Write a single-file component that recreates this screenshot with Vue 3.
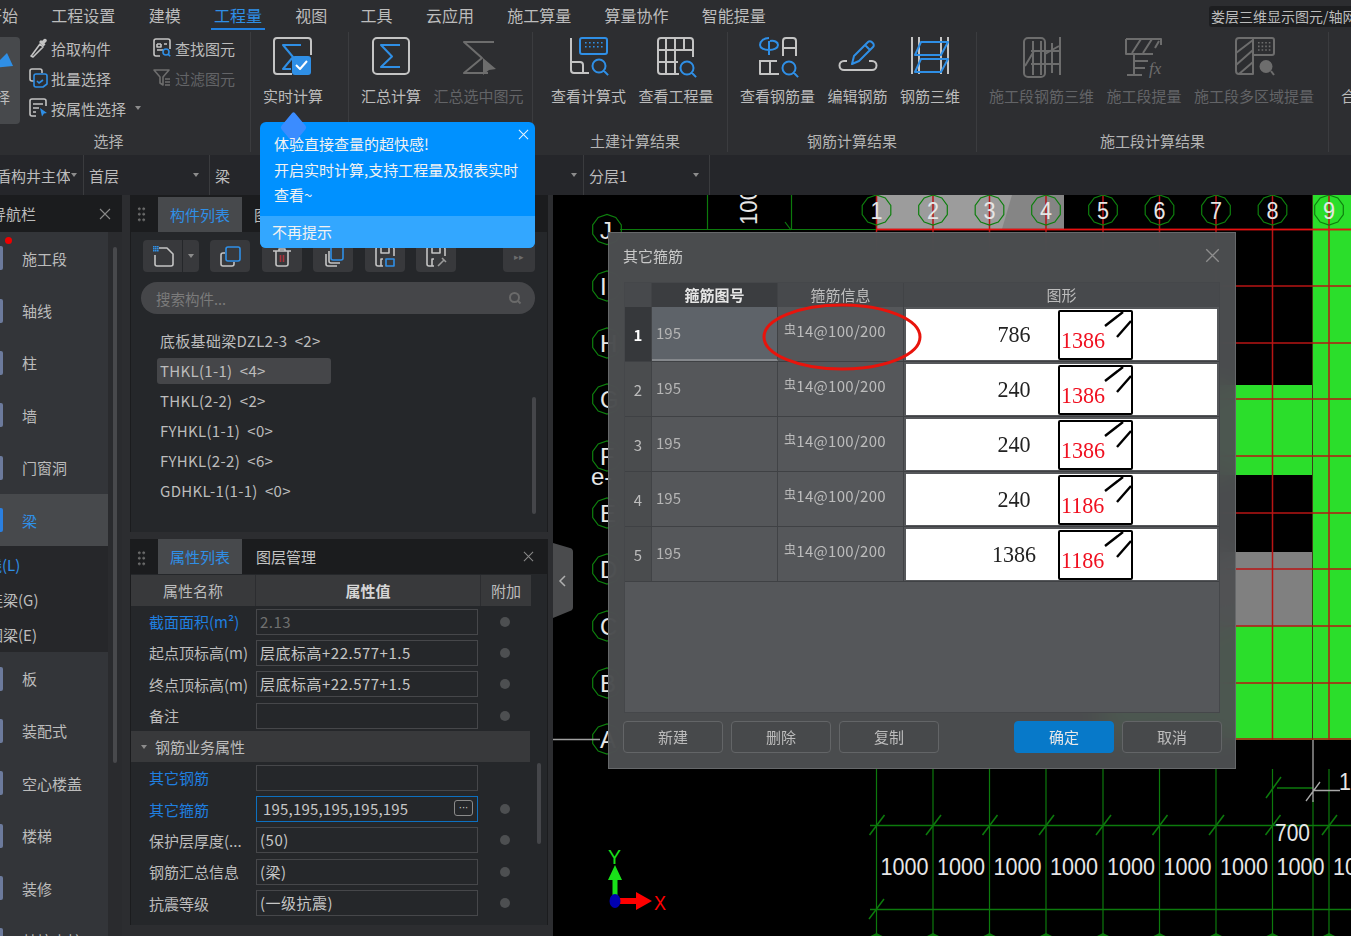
<script setup>
import { h } from "vue";

const colors = { g: "#c4c4c4", b: "#2f8fe6", d: "#6d6d6d", w: "#ffffff", r: "#a8323a", s: "#9a9a9a" };

// small drawing helpers for the icon data
const mag = (x, y, r) =>
  `M${x - r} ${y}a${r} ${r} 0 1 0 ${2 * r} 0a${r} ${r} 0 1 0 ${-2 * r} 0M${x + r * 0.7} ${y + r * 0.7}l${r * 0.7} ${r * 0.7}`;
const dots = (x, y, cols, rows, step) => {
  let d = "";
  for (let i = 0; i < cols; i++) {
    for (let j = 0; j < rows; j++) d += `M${x + i * step} ${y + j * step}h1.6v1.6h-1.6z`;
  }
  return d;
};

// each shape: [colour, path, filled?]
const icons = {
  live: [
    ["g", "M41 19V5a3 3 0 0 0-3-3H7a3 3 0 0 0-3 3v30a3 3 0 0 0 3 3h15"],
    ["b", "M31 9H13l10 12-10 12h8"],
    ["b", "M25 20h13a3 3 0 0 1 3 3v13a3 3 0 0 1-3 3H25a3 3 0 0 1-3-3V23a3 3 0 0 1 3-3z", true],
    ["w", "M26 29l4 4 7-8"],
  ],
  sum: [
    ["g", "M9 2h28a4 4 0 0 1 4 4v28a4 4 0 0 1-4 4H9a4 4 0 0 1-4-4V6a4 4 0 0 1 4-4z"],
    ["b", "M32 9H13l11 11.5L13 31h19"],
  ],
  sumSel: [
    ["d", "M38 6H8l18 16L8 37h24"],
    ["d", "M27 22l13 11-7 1-6 5z", true],
  ],
  formula: [
    ["g", "M5 2v32a3 3 0 0 0 3 3h15M5 26h9a3 3 0 0 1 3 3v8"],
    ["b", "M16 2h23a2 2 0 0 1 2 2v12a2 2 0 0 1-2 2H16a2 2 0 0 1-2-2V4a2 2 0 0 1 2-2z"],
    ["b", dots(19, 6, 5, 2, 4), true],
    ["b", mag(33, 30, 6.5)],
  ],
  amount: [
    ["g", "M26 38H8a3 3 0 0 1-3-3V5a3 3 0 0 1 3-3h29a3 3 0 0 1 3 3v16M5 14h35M5 26h20M13 2v36M22 2v36M31 2v12"],
    ["b", mag(34, 32, 6.5)],
  ],
  rebarQty: [
    ["b", "M14 2c-5 0-9 3-9 7 0 3 4 5 9 5s9-2 9-5c0-3-4-5-8-4M14 5v14"],
    ["g", "M28 20V5a3 3 0 0 1 3-3h7a3 3 0 0 1 3 3v15M28 12h13"],
    ["g", "M5 24v14h19M5 25h17M15 25v13"],
    ["b", mag(34, 32, 6.5)],
  ],
  rebarEdit: [
    ["b", "M17 28l2-8L33 6a2.6 2.6 0 0 1 3.7 0l1.3 1.3a2.6 2.6 0 0 1 0 3.7L24 25zM30 9l5 5"],
    ["g", "M12 25H9a4.5 4.5 0 0 0 0 9h28a4.5 4.5 0 0 0 0-9h-3"],
  ],
  rebar3d: [
    ["g", "M5 1v37M12 1v37M34 1v37M41 1v37"],
    ["b", "M14 6h27l-7 13H8zM14 23h27l-7 13H8z"],
  ],
  seg3d: [
    ["d", "M9 2h13a4 4 0 0 1 4 4v31a4 4 0 0 1-4 4H9a4 4 0 0 1-4-4V6a4 4 0 0 1 4-4zM14 5v34M22 5v34M33 7v30M41 1v38M12 15h30M12 28h30M6 30l9-15M26 18l14-8"],
  ],
  segFx: [
    ["d", "M5 3h35v6M5 3v15h27M11 17L20 3M22 17L31 3M38 5L34 12"],
    ["d", "M13 19v20M6 39h15M13 25h14M13 32h11"],
    ["t", "fx"],
  ],
  segArea: [
    ["d", "M22 2H8a3 3 0 0 0-3 3v30a3 3 0 0 0 3 3h14zM5 17L22 4M5 29L22 14M8 38l14-12M22 2h19a2 2 0 0 1 2 2v13a2 2 0 0 1-2 2H22"],
    ["d", dots(27, 6, 4, 3, 3.6), true],
    ["d", "M35 24a6.5 6.5 0 1 0 0 13a6.5 6.5 0 1 0 0-13z", true],
    ["d", "M40 35l3 4"],
  ],
  pick: [
    ["g", "M4 18l-1 1 2 1 1-1 9-9-3-3z"],
    ["g", "M13 3l1 1 2-2a1.8 1.8 0 0 1 2.5 2.5l-2 2 1 1-2 2-4.5-4.5z", true],
  ],
  batch: [
    ["g", "M6 14H4a2 2 0 0 1-2-2V4a2 2 0 0 1 2-2h8a2 2 0 0 1 2 2v2"],
    ["b", "M8 7h9a2 2 0 0 1 2 2v8l-4 3H8a2 2 0 0 1-2-2V9a2 2 0 0 1 2-2zM9 14l2 2 4-3"],
  ],
  attr: [
    ["g", "M8 19H4a2 2 0 0 1-2-2V4a2 2 0 0 1 2-2h12a2 2 0 0 1 2 2v5M5 7h10M5 11h6M5 15h3"],
    ["b", "M12 11l7 5-3 .5-2 3z", true],
  ],
  find: [
    ["g", "M8 19H4a2 2 0 0 1-2-2V4a2 2 0 0 1 2-2h12a2 2 0 0 1 2 2v8M5 7h4M12 7h3M5 7v3h4V7M5 13h6"],
    ["b", mag(14, 15, 3)],
  ],
  filter: [
    ["d", "M2 3h15l-6 7v8l-3-2v-6zM13 12h5M13 15h5M13 18h5"],
  ],
  newDoc: [
    ["g", "M8 4h8l6 6v10a2 2 0 0 1-2 2H6a2 2 0 0 1-2-2V11"],
    ["b", dots(2, 2, 3, 3, 2), true],
  ],
  copy: [
    ["g", "M7 9H5a2 2 0 0 0-2 2v9a2 2 0 0 0 2 2h9a2 2 0 0 0 2-2v-2"],
    ["b", "M10 3h10a2 2 0 0 1 2 2v10a2 2 0 0 1-2 2H10a2 2 0 0 1-2-2V5a2 2 0 0 1 2-2z"],
  ],
  trash: [
    ["g", "M3 7h18M6 7v13a2 2 0 0 0 2 2h8a2 2 0 0 0 2-2V7M9 7V5h6v2"],
    ["r", "M10.5 11v7M13.5 11v7"],
  ],
  layers: [
    ["g", "M5 10v10a2 2 0 0 0 2 2h9M8 7v10a2 2 0 0 0 2 2h9"],
    ["b", "M12 2h8a2 2 0 0 1 2 2v10a2 2 0 0 1-2 2h-8a2 2 0 0 1-2-2V4a2 2 0 0 1 2-2z"],
  ],
  saveIn: [
    ["g", "M10 22H5a2 2 0 0 1-2-2V5a2 2 0 0 1 2-2h14a2 2 0 0 1 2 2v7M8 3v6h8V3M8 22v-7h2"],
    ["b", "M13 15h8v7h-8z"],
  ],
  saveOut: [
    ["g", "M10 22H5a2 2 0 0 1-2-2V5a2 2 0 0 1 2-2h14a2 2 0 0 1 2 2v7M8 3v6h8V3M8 22v-7h2"],
    ["s", "M14 22l6-6M18 14l4 4", false],
  ],
};

const Ico = (props) =>
  h(
    "svg",
    { width: props.w, height: props.h, viewBox: `0 0 ${props.w} ${props.h}`, fill: "none", style: "flex:none;display:block" },
    icons[props.name].map(([c, d, filled]) =>
      c === "t"
        ? h("text", { x: 28, y: 38, fill: colors.d, "font-size": 17, "font-style": "italic", "font-family": "Liberation Serif, serif" }, d)
        : h("path", {
            d,
            fill: filled ? colors[c] : "none",
            stroke: filled ? "none" : colors[c],
            "stroke-width": props.sw || 2,
            "stroke-linejoin": "round",
          })
    )
  );
Ico.props = ["name", "w", "h", "sw"];

// thin close cross, the text glyph looked too heavy
const Cross = (props) =>
  h("svg", { width: props.s, height: props.s, viewBox: "0 0 12 12", fill: "none", stroke: props.c, "stroke-width": 1.1, style: "display:block;flex:none" }, [
    h("path", { d: "M1 1l10 10M11 1L1 11" }),
  ]);
Cross.props = ["s", "c"];

const tabs = ["开始", "工程设置", "建模", "工程量", "视图", "工具", "云应用", "施工算量", "算量协作", "智能提量"];

const groups = [
  { width: 98, label: "", items: [{ icon: "live", text: "实时计算" }] },
  { width: 184, label: "", items: [{ icon: "sum", text: "汇总计算" }, { icon: "sumSel", text: "汇总选中图元", off: true }] },
  { width: 195, label: "土建计算结果", wide: true, items: [{ icon: "formula", text: "查看计算式" }, { icon: "amount", text: "查看工程量" }] },
  { width: 249, label: "钢筋计算结果", items: [{ icon: "rebarQty", text: "查看钢筋量" }, { icon: "rebarEdit", text: "编辑钢筋" }, { icon: "rebar3d", text: "钢筋三维" }] },
  { width: 352, label: "施工段计算结果", items: [{ icon: "seg3d", text: "施工段钢筋三维", off: true }, { icon: "segFx", text: "施工段提量", off: true }, { icon: "segArea", text: "施工段多区域提量", off: true }] },
];

const navTop = ["施工段", "轴线", "柱", "墙", "门窗洞"];
const navSub = ["线(L)", "连梁(G)", "圈梁(E)"];
const navBottom = ["板", "装配式", "空心楼盖", "楼梯", "装修", "基坑支护"];

const tools = [
  { icon: "copy", w: 40 },
  { icon: "trash", w: 40 },
  { icon: "layers", w: 40 },
  { icon: "saveIn", w: 40 },
  { icon: "saveOut", w: 40 },
];

const parts = ["底板基础梁DZL2-3  <2>", "THKL(1-1)  <4>", "THKL(2-2)  <2>", "FYHKL(1-1)  <0>", "FYHKL(2-2)  <6>", "GDHKL-1(1-1)  <0>"];

const propsA = [
  { name: "截面面积(m²)", value: "2.13", link: true, dim: true },
  { name: "起点顶标高(m)", value: "层底标高+22.577+1.5" },
  { name: "终点顶标高(m)", value: "层底标高+22.577+1.5" },
  { name: "备注", value: "" },
];
const propsB = [
  { name: "其它钢筋", value: "", link: true, noDot: true },
  { name: "其它箍筋", value: "195,195,195,195,195", link: true, focus: true },
  { name: "保护层厚度(...", value: "(50)" },
  { name: "钢筋汇总信息", value: "(梁)" },
  { name: "抗震等级", value: "(一级抗震)" },
];

const rows = [
  { no: 1, len: 786, red: 1386 },
  { no: 2, len: 240, red: 1386 },
  { no: 3, len: 240, red: 1386 },
  { no: 4, len: 240, red: 1186 },
  { no: 5, len: 1386, red: 1186 },
];

// drawing coordinates below are page pixels, the svg viewBox starts at the canvas corner
const gridX = [876.5, 933, 989.5, 1046, 1103, 1159.5, 1216, 1272.5, 1329];
const gridY = [229.5, 286, 343, 399, 456, 513, 569, 626, 683, 739];
const sideAxes = ["J", "I", "H", "G", "F", "E", "D", "C", "B", "A"];

const deca = (cx, cy, r) => {
  const pts = [];
  for (let i = 0; i < 10; i++) {
    const a = (i * Math.PI) / 5 + Math.PI / 10;
    pts.push(`${(cx + r * Math.cos(a)).toFixed(1)},${(cy + r * Math.sin(a)).toFixed(1)}`);
  }
  return pts.join(" ");
};
</script>

<template>
  <div class="app">
    <div class="tabbar">
      <span v-for="t in tabs" :key="t" class="tab" :class="{ on: t === '工程量' }">{{ t }}</span>
      <span class="hint">娄层三维显示图元/轴网</span>
    </div>

    <div class="ribbon">
      <div class="group first">
        <div class="select-wrap">
          <div class="big-select">
            <svg width="20" height="16" viewBox="0 0 20 16"><path d="M-8 16L7 1l6 13z" fill="#2f8fe6" /></svg>
            <span>择</span>
          </div>
          <div class="small-col">
            <div class="small"><Ico name="pick" w="20" h="22" sw="1.6" />拾取构件</div>
            <div class="small"><Ico name="batch" w="20" h="22" sw="1.6" />批量选择</div>
            <div class="small"><Ico name="attr" w="20" h="22" sw="1.6" />按属性选择<i class="caret small-caret"></i></div>
          </div>
          <div class="small-col second">
            <div class="small"><Ico name="find" w="20" h="22" sw="1.6" />查找图元</div>
            <div class="small off"><Ico name="filter" w="20" h="22" sw="1.6" />过滤图元</div>
          </div>
        </div>
        <div class="group-label">选择</div>
      </div>
      <div v-for="(g, i) in groups" :key="i" class="group" :class="{ wide: g.wide }" :style="{ width: g.width + 'px' }">
        <div class="items">
          <div v-for="it in g.items" :key="it.text" class="item" :class="{ off: it.off }">
            <Ico :name="it.icon" w="46" h="42" />
            <span>{{ it.text }}</span>
          </div>
        </div>
        <div class="group-label">{{ g.label }}</div>
      </div>
      <div class="group last">
        <div class="items"><div class="item"><div class="icon-gap"></div><span>合法性</span></div></div>
      </div>
    </div>

    <div class="combos">
      <div class="combo c1"><span>盾构井主体</span><i class="caret"></i></div>
      <div class="combo c2"><span>首层</span><i class="caret"></i></div>
      <div class="combo c3"><span>梁</span><i class="caret"></i></div>
      <div class="combo c4"><span>分层1</span><i class="caret"></i></div>
    </div>

    <div class="main">
      <aside class="nav">
        <div class="panel-head nav-head"><span class="nav-title">导航栏</span><Cross s="12" c="#8a8a8a" /></div>
        <div class="nav-body">
          <div class="nav-list">
            <i class="red-dot"></i>
            <div v-for="n in navTop" :key="n" class="nav-item"><i class="stub"></i>{{ n }}</div>
            <div class="nav-item active"><i class="stub blue"></i>梁</div>
            <div class="nav-sub">
              <div v-for="(n, i) in navSub" :key="n" class="sub-item" :class="{ link: i === 0 }">{{ n }}</div>
            </div>
            <div v-for="n in navBottom" :key="n" class="nav-item"><i class="stub"></i>{{ n }}</div>
          </div>
          <div class="nav-track"><i></i></div>
        </div>
      </aside>

      <div class="middle">
        <section class="panel list-panel">
          <div class="panel-head">
            <span class="grip"></span>
            <span class="ptab on">构件列表</span>
            <span class="ptab">图层管理</span>
          </div>
          <div class="toolbar">
            <div class="tbtn split">
              <span class="split-main"><Ico name="newDoc" w="24" h="24" sw="1.6" /></span>
              <span class="split-side"><i class="caret"></i></span>
            </div>
            <div v-for="t in tools" :key="t.icon" class="tbtn" :style="{ width: t.w + 'px' }">
              <Ico :name="t.icon" w="24" h="24" sw="1.6" />
            </div>
            <div class="tbtn more">▸▸</div>
          </div>
          <div class="search">
            <span>搜索构件...</span>
            <svg width="16" height="16" viewBox="0 0 16 16" fill="none" stroke="#6a6a6a" stroke-width="2"><circle cx="7.5" cy="7.5" r="4.5" /><path d="M11 11l2.5 2.5" /></svg>
          </div>
          <div class="parts">
            <div v-for="(p, i) in parts" :key="p" class="part" :class="{ sel: i === 1 }">{{ p }}</div>
            <i class="list-scroll"></i>
          </div>
        </section>

        <section class="panel prop-panel">
          <div class="panel-head prop-top">
            <span class="grip"></span>
            <span class="ptab on">属性列表</span>
            <span class="ptab plain">图层管理</span>
            <span class="close right"><Cross s="11" c="#8a8a8a" /></span>
          </div>
          <div class="prop-head">
            <span class="ph1">属性名称</span>
            <span class="ph2">属性值</span>
            <span class="ph3">附加</span>
          </div>
          <div v-for="p in propsA" :key="p.name" class="prop-row">
            <span class="pname" :class="{ link: p.link }">{{ p.name }}</span>
            <span class="pval" :class="{ dim: p.dim }">{{ p.value }}</span>
            <i class="pdot"></i>
          </div>
          <div class="prop-section"><i class="caret"></i>钢筋业务属性</div>
          <div v-for="p in propsB" :key="p.name" class="prop-row">
            <span class="pname" :class="{ link: p.link }">{{ p.name }}</span>
            <span class="pval" :class="{ focus: p.focus }">{{ p.value }}<b v-if="p.focus" class="dots">···</b></span>
            <i v-if="!p.noDot" class="pdot"></i>
          </div>
          <i class="prop-scroll"></i>
        </section>
        <div class="bottom-strip"><i></i></div>
      </div>

      <div class="canvas">
        <svg class="cad" width="798" height="741" viewBox="553 195 798 741">
          <rect x="553" y="195" width="798" height="741" fill="#000" />
          <rect x="876" y="195" width="188" height="34" fill="#9c9c9c" />
          <polygon points="1012,195 1064,195 1064,229 1002,229" fill="#858585" />
          <rect x="1313" y="195" width="38" height="545" fill="#2bde2b" />
          <rect x="1100" y="385" width="212" height="90" fill="#2bde2b" />
          <rect x="1100" y="552" width="212" height="74" fill="#808080" />
          <rect x="1100" y="626" width="212" height="114" fill="#2bde2b" />
          <path d="M1312.5 195V740" stroke="#3d3d1a" />

          <line v-for="x in gridX" :key="'rv' + x" :x1="x" y1="195" :x2="x" y2="740" stroke="#b81414" stroke-width="1.5" />
          <line v-for="y in gridY" :key="'rh' + y" x1="876" :y1="y" x2="1351" :y2="y" stroke="#b81414" stroke-width="1.5" />
          <path d="M876 229.5H1351" stroke="#e81010" stroke-width="1.5" />

          <path d="M620 229.5H876M707.5 195V229M791.5 195V229M785 222l6 8" stroke="#0c7a0c" stroke-width="1.2" fill="none" />
          <text x="0" y="0" class="cad-t" transform="translate(757 225) rotate(-90)" textLength="37" lengthAdjust="spacingAndGlyphs">100</text>

          <g v-for="(x, i) in gridX" :key="'c' + x">
            <polygon :points="deca(x, 210, 15)" fill="none" stroke="#0e7f0e" stroke-width="1.2" />
            <text :x="x - 6" y="219" class="cad-t" textLength="12" lengthAdjust="spacingAndGlyphs">{{ i + 1 }}</text>
          </g>

          <g v-for="(y, i) in gridY" :key="'a' + y">
            <polygon :points="deca(607, y, 15)" fill="none" stroke="#0e7f0e" stroke-width="1.2" />
            <text x="600" :y="y + 9" class="cad-t">{{ sideAxes[i] }}</text>
          </g>
          <text x="591" y="485" class="cad-t">e-</text>
          <path d="M553 739.5H600" stroke="#a0a0a0" stroke-width="1.5" />

          <!-- lower dimension lines -->
          <line v-for="x in gridX" :key="'gv' + x" :x1="x" y1="769" :x2="x" y2="936" stroke="#0c7a0c" stroke-width="1.2" />
          <path d="M1313 800V936" stroke="#0c7a0c" stroke-width="1.2" />
          <path d="M870 825.5H1351M870 909.5H1351M1277 788H1313" stroke="#0c7a0c" stroke-width="1.5" />
          <line v-for="x in gridX" :key="'t' + x" :x1="x - 7" y1="835" :x2="x + 8" y2="815" stroke="#0c7a0c" stroke-width="1.5" />
          <path d="M869 919l15-20M1266 798l15-21" stroke="#0c7a0c" stroke-width="1.5" />
          <path d="M1313 740V802M1313 790.5H1340M1306 801l14-19" stroke="#a8a8a8" stroke-width="1.3" fill="none" />
          <text v-for="x in gridX" :key="'d' + x" :x="x + 4" y="875" class="cad-t" textLength="48" lengthAdjust="spacingAndGlyphs">1000</text>
          <text x="1275" y="841" class="cad-t" textLength="35" lengthAdjust="spacingAndGlyphs">700</text>
          <text x="1339" y="790" class="cad-t" textLength="12" lengthAdjust="spacingAndGlyphs">1</text>
          <polygon v-for="x in gridX" :key="'b' + x" :points="`${x - 6},936 ${x},933 ${x + 6},936`" fill="#0c7a0c" />

          <!-- axis gizmo -->
          <path d="M612.5 901V880H608L615 865l7 15h-4.5V901z" fill="#19e019" />
          <path d="M615 898h21v-6l16 9-16 9v-6h-21z" fill="#ff0000" />
          <ellipse cx="615" cy="901" rx="5.5" ry="7" fill="#0000b0" />
          <text x="608" y="864" fill="#19e019" class="gizmo" textLength="13" lengthAdjust="spacingAndGlyphs">Y</text>
          <text x="654" y="910" fill="#ff0000" class="gizmo" textLength="12" lengthAdjust="spacingAndGlyphs">X</text>
        </svg>

        <div class="handle">
          <svg width="21" height="75" viewBox="0 0 21 75"><path d="M0 0l17 5a4 4 0 0 1 3 4v55a4 4 0 0 1-3 4L0 75z" fill="#4a4b4d" /><path d="M12 33l-5 5 5 5" fill="none" stroke="#b0b0b0" stroke-width="1.5" /></svg>
        </div>

        <div class="dialog">
          <div class="dlg-head"><span>其它箍筋</span><Cross s="15" c="#8e8e8e" /></div>
          <div class="dlg-table">
            <div class="tr head">
              <div class="td corner"></div>
              <div class="td col strong">箍筋图号</div>
              <div class="td col">箍筋信息</div>
              <div class="td col">图形</div>
            </div>
            <div v-for="r in rows" :key="r.no" class="tr" :class="{ cur: r.no === 1 }">
              <div class="td no">{{ r.no }}</div>
              <div class="td code">195</div>
              <div class="td info"><small>虫</small>14@100/200</div>
              <div class="td shape">
                <span class="len">{{ r.len }}</span>
                <div class="stirrup">
                  <svg width="72" height="46" viewBox="0 0 72 46" fill="none" stroke="#000" stroke-width="2.4"><path d="M45 14L63 0M57 25L71 9" /></svg>
                  <span>{{ r.red }}</span>
                </div>
              </div>
            </div>
          </div>
          <div class="dlg-foot">
            <span class="btn">新建</span>
            <span class="btn">删除</span>
            <span class="btn">复制</span>
            <span class="spacer"></span>
            <span class="btn primary">确定</span>
            <span class="btn">取消</span>
          </div>
          <svg class="ring" width="164" height="70" viewBox="0 0 164 70"><ellipse cx="82" cy="35" rx="78" ry="32" fill="none" stroke="#e8140c" stroke-width="3" /></svg>
        </div>
      </div>
    </div>

    <div class="tooltip">
      <i class="diamond"></i>
      <span class="tip-x"><Cross s="11" c="#e8f4ff" /></span>
      <div class="tip-body">
        <p>体验直接查量的超快感!</p>
        <p>开启实时计算,支持工程量及报表实时</p>
        <p>查看~</p>
      </div>
      <div class="tip-foot">不再提示</div>
    </div>
  </div>
</template>

<style>
html,
body {
  margin: 0;
  background: #000;
}
</style>

<style scoped>
.app {
  position: relative;
  width: 1351px;
  height: 936px;
  overflow: hidden;
  display: flex;
  flex-direction: column;
  background: #2c2d30;
  color: #bcbcbc;
  font-family: "Noto Sans CJK SC", "Noto Sans", sans-serif;
  font-size: 15px;
}
p {
  margin: 0;
}
i {
  display: block;
}

/* top tabs */
.tabbar {
  height: 30px;
  flex: none;
  display: flex;
  gap: 33.3px;
  margin-left: -14px;
  position: relative;
  background: #2c2d30;
}
.tab {
  font-size: 16px;
  line-height: 30px;
  height: 30px;
  position: relative;
  white-space: nowrap;
}
.tab.on {
  color: #2f8fe6;
}
.tab.on::after {
  content: "";
  position: absolute;
  left: -3px;
  right: -3px;
  top: 28px;
  height: 2px;
  background: #1f7fe0;
}
.hint {
  position: absolute;
  left: 1223px;
  top: 6px;
  width: 160px;
  height: 21px;
  line-height: 21px;
  padding-left: 2px;
  font-size: 14px;
  background: #1d1e20;
  border-radius: 3px;
  white-space: nowrap;
}

/* ribbon */
.ribbon {
  height: 125px;
  flex: none;
  display: flex;
  background: #2d2e31;
}
.group {
  flex: none;
  box-sizing: border-box;
  height: 120px;
  margin-top: 2px;
  display: flex;
  flex-direction: column;
  border-right: 1px solid #3b3c3f;
}
.group.first {
  width: 251px;
}
.group.last {
  flex: 1;
  border: 0;
}
.select-wrap {
  flex: 1;
  display: flex;
  padding-top: 5px;
}
.big-select {
  width: 20px;
  height: 87px;
  background: #47494c;
  border-radius: 0 4px 4px 0;
  overflow: hidden;
  display: flex;
  flex-direction: column;
  gap: 19px;
  padding-top: 15px;
  box-sizing: border-box;
}
.big-select span {
  margin-left: -5px;
  font-size: 15px;
  line-height: 20px;
}
.small-col {
  width: 124px;
  margin: -4px 0 0 8px;
}
.small-col.second {
  margin-left: 0;
  width: auto;
}
.small {
  height: 30px;
  display: flex;
  align-items: center;
  gap: 3px;
  white-space: nowrap;
}
.off {
  color: #636467;
}
.small-caret {
  margin-left: 6px;
}
.caret {
  width: 0;
  height: 0;
  border: 3.5px solid transparent;
  border-top: 4px solid #8c8c8c;
  border-bottom: 0;
}
.items {
  flex: 1;
  display: flex;
  gap: 12.5px;
  padding: 4px 0 0 12px;
}
.wide .items {
  padding-left: 18px;
}
.wide .group-label {
  padding-left: 10px;
}
.item {
  display: flex;
  flex-direction: column;
  align-items: center;
  white-space: nowrap;
  line-height: 20px;
  gap: 8px;
}
.icon-gap {
  height: 42px;
}
.group-label {
  height: 26px;
  line-height: 29px;
  text-align: center;
  flex: none;
  color: #b4b4b4;
}
.group.first .group-label {
  padding-right: 33px;
}

/* combo row */
.combos {
  height: 40px;
  flex: none;
  display: flex;
  background: #25262a;
  box-sizing: border-box;
}
.combo {
  box-sizing: border-box;
  display: flex;
  align-items: center;
  justify-content: space-between;
  border-right: 1px solid #3a3b3e;
  padding: 0 10px 0 5px;
  white-space: nowrap;
  overflow: hidden;
}
.c1 {
  width: 84px;
  padding: 0 6px 0 0;
}
.c1 span {
  margin-left: -4px;
  width: 74px;
  overflow: hidden;
}
.c2 {
  width: 126px;
}
.c3 {
  width: 374px;
  padding-right: 6px;
}
.c4 {
  width: 126px;
}

.main {
  flex: 1;
  min-height: 0;
  display: flex;
}

/* navigator */
.nav {
  width: 122px;
  flex: none;
  display: flex;
  flex-direction: column;
}
.panel-head {
  height: 37px;
  flex: none;
  display: flex;
  align-items: stretch;
  background: #1b1c1e;
  position: relative;
}
.prop-top {
  height: 35px;
}
.nav-head {
  align-items: center;
  justify-content: space-between;
  padding-right: 11px;
}
.nav-title {
  margin-left: -9px;
}
.close.right {
  position: absolute;
  right: 13px;
  top: 12px;
}
.nav-body {
  flex: 1;
  min-height: 0;
  display: flex;
}
.nav-list {
  width: 108px;
  flex: none;
  background: #333539;
  position: relative;
  overflow: hidden;
}
.red-dot {
  position: absolute;
  left: 5px;
  top: 5px;
  width: 7px;
  height: 7px;
  border-radius: 50%;
  background: #ee0000;
}
.nav-item {
  height: 52.4px;
  display: flex;
  align-items: center;
  font-size: 15px;
  white-space: nowrap;
}
.nav-item.active {
  background: #47494c;
  color: #2f8fe6;
}
.stub {
  width: 3px;
  height: 24px;
  margin-right: 19px;
  background: #6c7a9c;
  border-radius: 0 2px 2px 0;
  flex: none;
}
.stub.blue {
  background: #2a7fe0;
}
.nav-sub {
  background: #26272a;
  padding: 1px 0;
  height: 104px;
}
.sub-item {
  height: 35px;
  line-height: 35px;
  margin-left: -12px;
  white-space: nowrap;
  font-size: 15px;
}
.sub-item.link {
  color: #2f8fe6;
  margin-left: -13px;
}
.nav-track {
  flex: 1;
  background: #2a2b2e;
  position: relative;
}
.nav-track i {
  position: absolute;
  left: 5px;
  top: 15px;
  width: 4px;
  height: 516px;
  border-radius: 2px;
  background: #48494c;
}

/* middle column */
.middle {
  width: 418px;
  flex: none;
  margin: 0 5px 0 8px;
  display: flex;
  flex-direction: column;
  gap: 7px;
}
.panel {
  background: #25272a;
  position: relative;
  border-right: 1px solid #1b1c1e;
  border-left: 1px solid #1b1c1e;
  box-sizing: border-box;
}
.list-panel {
  height: 337px;
  flex: none;
}
.prop-panel {
  height: 386px;
  flex: none;
  overflow: hidden;
}
.grip {
  width: 9px;
  margin: 11px 12px 0 6px;
  height: 16px;
  background-image: radial-gradient(circle, #6a6a6a 1.3px, transparent 1.5px);
  background-size: 4.5px 5.5px;
}
.ptab {
  padding: 0 12px;
  line-height: 36px;
  font-size: 15px;
  height: 35px;
  margin-top: 2px;
  white-space: nowrap;
}
.prop-top .ptab {
  margin-top: 0;
}
.ptab.on {
  background: #47494c;
  color: #2f8fe6;
}
.ptab.plain {
  color: #c4c4c4;
  padding-left: 14px;
}
.toolbar {
  display: flex;
  gap: 11.4px;
  padding: 8px 0 0 12px;
  height: 32px;
}
.tbtn {
  height: 32px;
  background: #38393c;
  border-radius: 4px;
  display: flex;
  align-items: center;
  justify-content: center;
}
.split {
  width: 56px;
  gap: 1px;
  background: none;
}
.split-main {
  width: 39px;
  height: 32px;
  background: #38393c;
  border-radius: 4px 0 0 4px;
  display: flex;
  align-items: center;
  justify-content: center;
}
.split-side {
  width: 16px;
  height: 32px;
  background: #38393c;
  border-radius: 0 4px 4px 0;
  display: flex;
  align-items: center;
  justify-content: center;
}
.more {
  width: 32px;
  margin-left: 35.6px;
  color: #6c6c6c;
  font-size: 9px;
}
.search {
  margin: 10px 12px 0 10px;
  height: 32px;
  border-radius: 16px;
  background: #454649;
  display: flex;
  align-items: center;
  justify-content: space-between;
  padding: 0 12px 0 15px;
  color: #7b7b7b;
  font-size: 14.5px;
}
.parts {
  margin: 12px 0 0 26px;
  position: relative;
}
.part {
  height: 30px;
  line-height: 30px;
  padding-left: 3px;
  width: 174px;
  box-sizing: border-box;
  white-space: pre;
  font-size: 15px;
  letter-spacing: 0.3px;
}
.part.sel {
  background: #454649;
  border-radius: 3px;
  height: 26px;
  line-height: 26px;
  margin: 2px 0;
}
.list-scroll {
  position: absolute;
  left: 375px;
  top: 71px;
  width: 4px;
  height: 117px;
  border-radius: 2px;
  background: #45464a;
}

.prop-head {
  height: 31px;
  margin-top: 1px;
  margin-right: 16px;
  display: flex;
  background: #38393b;
  line-height: 31px;
  text-align: center;
  font-size: 15px;
}
.ph1 {
  width: 124px;
  border-right: 1px solid #2c2d30;
}
.ph2 {
  width: 224px;
  border-right: 1px solid #2c2d30;
  font-weight: 700;
  color: #d6d6d6;
}
.ph3 {
  flex: 1;
}
.prop-row {
  height: 31.3px;
  display: flex;
  align-items: center;
  position: relative;
}
.pname {
  width: 125px;
  padding-left: 18px;
  box-sizing: border-box;
  flex: none;
  white-space: nowrap;
  font-size: 15px;
}
.link {
  color: #1f7fe0;
}
.pval {
  width: 222px;
  height: 26px;
  line-height: 24px;
  box-sizing: border-box;
  border: 1px solid #46474a;
  padding-left: 3px;
  flex: none;
  position: relative;
  color: #c6c6c6;
  font-size: 15px;
  letter-spacing: 0.5px;
  white-space: nowrap;
}
.pval.dim {
  color: #707070;
}
.pval.focus {
  border-color: #0d70c0;
  padding-left: 6px;
  letter-spacing: 0.2px;
}
.dots {
  position: absolute;
  right: 4px;
  top: 3px;
  width: 19px;
  height: 16px;
  border: 1px solid #8a8a8a;
  border-radius: 3px;
  font-family: "DejaVu Sans", sans-serif;
  font-size: 10px;
  line-height: 14px;
  letter-spacing: 0;
  text-align: center;
  font-weight: 400;
  box-sizing: border-box;
  overflow: hidden;
}
.pdot {
  width: 10px;
  height: 10px;
  border-radius: 50%;
  background: #4d4f51;
  margin-left: 22px;
  flex: none;
}
.prop-section {
  height: 31px;
  margin: 0 17px 0 0;
  background: #38393b;
  display: flex;
  align-items: center;
  gap: 8px;
  padding-left: 10px;
  font-size: 15px;
}
.prop-scroll {
  position: absolute;
  left: 406px;
  top: 224px;
  width: 4px;
  height: 81px;
  border-radius: 2px;
  background: #45464a;
}
.bottom-strip {
  flex: 1;
  position: relative;
}
.bottom-strip i {
  position: absolute;
  left: 8px;
  top: 6px;
  width: 96px;
  height: 10px;
  border-radius: 3px;
  background: #3c3d40;
}

/* cad canvas */
.canvas {
  flex: 1;
  position: relative;
  overflow: hidden;
  background: #000;
}
.cad {
  display: block;
}
.cad-t {
  fill: #e6e6e6;
  font-family: "Liberation Sans", sans-serif;
  font-size: 24px;
}
.gizmo {
  font-family: "Liberation Sans", sans-serif;
  font-size: 20px;
}
.handle {
  position: absolute;
  left: 0;
  top: 348px;
}
.dialog {
  position: absolute;
  left: 55px;
  top: 37px;
  width: 628px;
  height: 537px;
  box-sizing: border-box;
  border: 1px solid #66686a;
  padding: 0 15px;
  background: rgba(78, 80, 82, 0.95);
  backdrop-filter: blur(14px);
  display: flex;
  flex-direction: column;
}
.dlg-head {
  height: 49px;
  padding-bottom: 4px;
  margin-left: -1px;
  box-sizing: border-box;
  flex: none;
  display: flex;
  align-items: center;
  justify-content: space-between;
  font-size: 15px;
  color: #c8c8c8;
}
.dlg-table {
  height: 431px;
  flex: none;
  background: #55575a;
  border: 1px solid #45474a;
  box-sizing: border-box;
}
.tr {
  display: flex;
  height: 55px;
  border-bottom: 1px solid #3f4144;
  box-sizing: border-box;
}
.tr.head {
  height: 24px;
  background: #47494c;
  border-bottom: 0;
}
.td {
  box-sizing: border-box;
  border-right: 1px solid #414346;
  flex: none;
}
.corner,
.no {
  width: 27px;
}
.col {
  width: 126px;
  text-align: center;
  line-height: 24px;
  font-size: 15px;
}
.col:last-child {
  flex: 1;
  border-right: 0;
}
.strong {
  background: #3b3d40;
  color: #e6e6e6;
  font-weight: 700;
}
.no {
  background: #4a4c4e;
  line-height: 55px;
  text-align: center;
  font-size: 15px;
}
.cur .no {
  background: #36383b;
  color: #fff;
  font-weight: 700;
}
.code {
  width: 126px;
  line-height: 51px;
  padding-left: 4px;
  font-size: 15px;
  color: #b4b4b4;
}
.cur .code {
  background: #5e6369;
  border-bottom: 2px solid #85888c;
}
.info {
  width: 126px;
  line-height: 47px;
  padding-left: 6px;
  font-size: 15px;
  letter-spacing: 0.3px;
  color: #bcbcbc;
  white-space: nowrap;
}
.info small {
  font-size: 12px;
  position: relative;
  top: -3px;
}
.shape {
  flex: 1;
  border: 0;
  margin: 2px 2px 1px 2px;
  background: #fff;
  display: flex;
  align-items: center;
  color: #222;
  font-family: "Liberation Serif", serif;
  font-size: 24px;
}
.len {
  width: 76px;
  margin-left: 70px;
  margin-right: 2px;
  text-align: center;
  flex: none;
  transform: scaleX(0.92);
}
.stirrup {
  width: 75px;
  height: 50px;
  margin-left: 4px;
  box-sizing: border-box;
  border: 2px solid #000;
  border-radius: 2px;
  position: relative;
  flex: none;
}
.stirrup svg {
  position: absolute;
  left: 0;
  top: 0;
}
.stirrup span {
  position: absolute;
  left: 1px;
  bottom: 3px;
  line-height: 30px;
  color: #f01020;
  transform: scaleX(0.92);
  transform-origin: left center;
}
.dlg-foot {
  flex: 1;
  display: flex;
  gap: 8px;
  padding-top: 8px;
  margin-left: -1px;
  margin-right: -1px;
}
.btn {
  width: 100px;
  flex: none;
  height: 32px;
  box-sizing: border-box;
  border: 1px solid #636567;
  border-radius: 4px;
  background: #47494b;
  text-align: center;
  line-height: 30px;
  font-size: 15px;
}
.btn.primary {
  background: #0779c9;
  border-color: #0779c9;
  color: #e8e8e8;
}
.spacer {
  width: 59px;
  flex: none;
}
.ring {
  position: absolute;
  left: 151px;
  top: 69px;
}

/* tip over the ribbon */
.tooltip {
  position: absolute;
  left: 260px;
  top: 122px;
  width: 275px;
  height: 126px;
  border-radius: 6px;
  background: #0091ff;
  color: #f2f2f2;
  font-size: 15px;
}
.diamond {
  position: absolute;
  left: 24px;
  top: -4.5px;
  width: 19px;
  height: 19px;
  background: #3b8cff;
  transform: scaleY(1.2) rotate(45deg);
  border-radius: 2px;
}
.tip-x {
  position: absolute;
  right: 6px;
  top: 7px;
}
.tip-body {
  position: relative;
  padding: 9px 0 0 14px;
  line-height: 25.5px;
  height: 85px;
  box-sizing: border-box;
  white-space: nowrap;
}
.tip-foot {
  margin-top: 9px;
  height: 32px;
  line-height: 32px;
  padding-left: 12px;
  background: #33a7ff;
  border-radius: 0 0 6px 6px;
}
</style>
